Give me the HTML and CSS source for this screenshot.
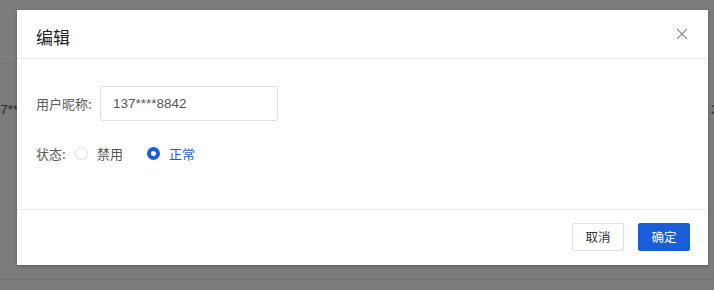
FILE: index.html
```html
<!DOCTYPE html>
<html lang="zh">
<head>
<meta charset="utf-8">
<link rel="stylesheet" href="styles.css">
</head>
<body>
<div class="page">
  <div class="page-top"></div>
  <div class="page-row">
    <span class="cell-left">137****8842</span>
    <span class="cell-right">3</span>
  </div>
  <div class="page-bottom"></div>
</div>
<div class="overlay">
  <div class="modal">
    <div class="modal-header">
      <span class="modal-title">编辑</span>
      <svg class="close" width="12" height="12" viewBox="0 0 12 12"><path d="M1 1L11 11M11 1L1 11" stroke="#8c8c8c" stroke-width="1.1" fill="none"/></svg>
    </div>
    <div class="modal-body">
      <div class="form-row">
        <span class="label">用户昵称:</span>
        <div class="input">137****8842</div>
      </div>
      <div class="form-row status">
        <span class="label">状态:</span>
        <span class="radio"><span class="dot"></span>禁用</span>
        <span class="radio checked"><span class="dot"></span>正常</span>
      </div>
    </div>
    <div class="modal-footer">
      <button class="btn">取消</button>
      <button class="btn primary">确定</button>
    </div>
  </div>
</div>
</body>
</html>
```
FILE: styles.css
```css
* { box-sizing: border-box; }
html, body { margin: 0; padding: 0; }
body {
  width: 714px;
  height: 290px;
  overflow: hidden;
  background: #7b7b7b;
  font-family: "Noto Sans CJK SC", "Liberation Sans", sans-serif;
  position: relative;
}
.page { height: 290px; display: flex; flex-direction: column; }
.page-top { height: 57px; border-bottom: 1px solid #818181; flex: none; }
.page-row {
  height: 222px;
  display: flex;
  justify-content: space-between;
  align-items: flex-start;
  padding-top: 45px;
  font-family: "Liberation Sans", sans-serif;
  font-size: 13px;
  color: #2a2a2a;
}
.cell-left { margin-left: -14px; }
.cell-right { margin-right: -4px; }
.page-bottom { border-top: 1px solid #6d6d6d; flex: none; }
.overlay {
  position: absolute;
  inset: 0;
  padding: 10px 6px 0 17px;
}
.modal {
  width: 691px;
  height: 255px;
  background: #fff;
  display: flex;
  flex-direction: column;
  box-shadow: 0 1px 3px rgba(0,0,0,0.25);
}
.modal-header {
  height: 49px;
  border-bottom: 1px solid #ececec;
  display: flex;
  align-items: center;
  justify-content: space-between;
  padding: 4px 20px 0 19px;
}
.modal-title { font-size: 17px; color: #222; }
.close { margin-top: -4px; }
.modal-body { flex: 1; padding: 27px 19px 0; color: #606266; font-size: 13px; }
.form-row { display: flex; align-items: center; }
.label { width: 64px; color: #5c5c5c; }
.input {
  width: 178px;
  height: 35px;
  border: 1px solid #dcdfe6;
  border-radius: 3px;
  padding: 0 12px;
  display: flex;
  align-items: center;
  font-family: "Liberation Sans", sans-serif;
  font-size: 13.5px;
  color: #555;
}
.status { margin-top: 23px; }
.status .label { width: 39px; }
.radio { display: flex; align-items: center; color: #555; margin-right: 24px; }
.dot {
  width: 13px;
  height: 13px;
  border: 1px solid #dcdfe6;
  border-radius: 50%;
  margin-right: 9px;
  background: #fff;
}
.radio.checked { color: #1a5dd8; }
.radio.checked .dot { border: 4px solid #1a5dd8; }
.modal-footer {
  height: 56px;
  border-top: 1px solid #ececec;
  display: flex;
  justify-content: flex-end;
  align-items: center;
  gap: 14px;
  padding: 0 18px 2px 0;
}
.btn {
  width: 52px;
  height: 28px;
  border: 1px solid #dcdfe6;
  border-radius: 2px;
  background: #fff;
  color: #333;
  font-family: "Noto Sans CJK SC", sans-serif;
  font-size: 12.5px;
  padding: 0;
}
.btn.primary { background: #1a5dd8; border-color: #1a5dd8; color: #fff; }
```
